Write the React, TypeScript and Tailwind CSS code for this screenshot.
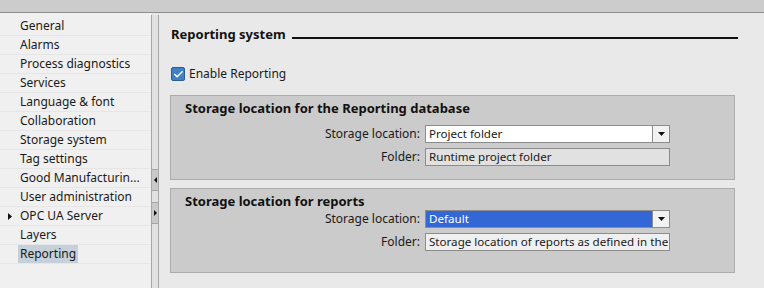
import { Check } from "lucide-react";

const NAV = [
  "General",
  "Alarms",
  "Process diagnostics",
  "Services",
  "Language & font",
  "Collaboration",
  "Storage system",
  "Tag settings",
  "Good Manufacturin...",
  "User administration",
  "OPC UA Server",
  "Layers",
  "Reporting",
];

function Field({
  value,
  dropdown,
  tone,
}: {
  value: string;
  dropdown?: boolean;
  tone: "white" | "blue" | "gray" | "light";
}) {
  const bg =
    tone === "blue"
      ? "bg-[#3367d6] text-white"
      : tone === "gray"
        ? "bg-[#e1e1e1] text-[#1a1a1a]"
        : tone === "light"
          ? "bg-[#f0f0f0] text-[#1a1a1a]"
          : "bg-white text-[#1a1a1a]";
  return (
    <div
      className={`flex h-[18px] w-[245px] items-center overflow-hidden border border-[#8c8c8c] text-[11.6px] ${bg}`}
    >
      <span className="min-w-0 flex-1 overflow-hidden whitespace-nowrap pl-[3px] leading-[16px]">
        {value}
      </span>
      {dropdown ? (
        <span className="flex h-full w-[17px] shrink-0 items-center justify-center border-l border-[#8c8c8c] bg-[#f2f2f2]">
          <svg width="7" height="4" viewBox="0 0 7 4" aria-hidden="true">
            <path d="M0 0h7L3.5 4z" fill="#111" />
          </svg>
        </span>
      ) : null}
    </div>
  );
}

function Group({
  title,
  location,
  folder,
  selected,
}: {
  title: string;
  location: string;
  folder: string;
  selected?: boolean;
}) {
  return (
    <section className="h-[85px] w-[565px] border border-[#adadad] bg-[#cbcbcb]">
      <h2 className="pl-[14px] pt-[3px] text-[13px] font-bold leading-[18px] text-[#111]">
        {title}
      </h2>
      <div className={`flex flex-col gap-[5px] ${selected ? "mt-0" : "mt-[8px]"}`}>
        <div className="flex items-center">
          <span className="w-[254px] pr-[5px] text-right">Storage location:</span>
          <Field value={location} dropdown tone={selected ? "blue" : "white"} />
        </div>
        <div className="flex items-center">
          <span className="w-[254px] pr-[5px] text-right">Folder:</span>
          <Field value={folder} tone={selected ? "light" : "gray"} />
        </div>
      </div>
    </section>
  );
}

export default function App() {
  return (
    <div className="flex h-[288px] w-[764px] flex-col overflow-hidden bg-[#e9e9e9] font-['Noto_Sans',sans-serif] text-[12px] text-[#1a1a1a]">
      <div className="h-[13px] shrink-0 border-b border-[#8e8e8e] bg-[#cccccc]" />
      <div className="flex flex-1">
        {/* tree of settings */}
        <nav className="w-[151px] shrink-0 bg-[#f0f0f0] pt-[4px]">
          <ul>
            {NAV.map((item) => (
              <li
                key={item}
                className="relative flex h-[19px] items-center border-b border-[#e6e6e6] pl-[18px]"
              >
                {item === "OPC UA Server" ? (
                  <svg
                    className="absolute left-[8px] top-[6px]"
                    width="4"
                    height="7"
                    viewBox="0 0 4 7"
                    aria-hidden="true"
                  >
                    <path d="M0 0l4 3.5L0 7z" fill="#111" />
                  </svg>
                ) : null}
                <span
                  className={`whitespace-nowrap px-[2px] leading-[18px] ${
                    item === "Reporting" ? "bg-[#c6d0da]" : ""
                  }`}
                >
                  {item}
                </span>
              </li>
            ))}
          </ul>
        </nav>

        {/* splitter */}
        <div className="mt-[2px] flex w-[8px] shrink-0 flex-col border-x border-[#a6a6a6] bg-[#e2e2e2]">
          <div className="h-[154px]" />
          <div className="flex h-[22px] items-center justify-center border-y border-[#a6a6a6] bg-[#c9c9c9]">
            <svg width="3" height="6" viewBox="0 0 3 6" aria-hidden="true">
              <path d="M3 0v6L0 3z" fill="#111" />
            </svg>
          </div>
          <div className="h-[11px]" />
          <div className="flex h-[22px] items-center justify-center border-y border-[#a6a6a6] bg-[#c9c9c9]">
            <svg width="3" height="6" viewBox="0 0 3 6" aria-hidden="true">
              <path d="M0 0v6l3-3z" fill="#111" />
            </svg>
          </div>
        </div>

        {/* properties */}
        <main className="flex-1 pl-[12px]">
          <div className="mt-[12px] flex items-center">
            <h1 className="text-[13px] font-bold leading-[18px] text-[#111]">
              Reporting system
            </h1>
            <div className="ml-[6px] mt-[8px] h-[1.5px] w-[446px] bg-[#111]" />
          </div>

          <label className="mt-[22px] flex items-center gap-[4px]">
            <span className="flex h-[14px] w-[14px] items-center justify-center rounded-[2px] border border-[#2c5d8f] bg-[#3d82c8]">
              <Check className="h-[11px] w-[11px] text-white" strokeWidth={3.5} />
            </span>
            <span>Enable Reporting</span>
          </label>

          <div className="-ml-[1px] mt-[12px] flex flex-col gap-[8px]">
            <Group
              title="Storage location for the Reporting database"
              location="Project folder"
              folder="Runtime project folder"
            />
            <Group
              title="Storage location for reports"
              location="Default"
              folder="Storage location of reports as defined in the"
              selected
            />
          </div>
        </main>
      </div>
    </div>
  );
}
